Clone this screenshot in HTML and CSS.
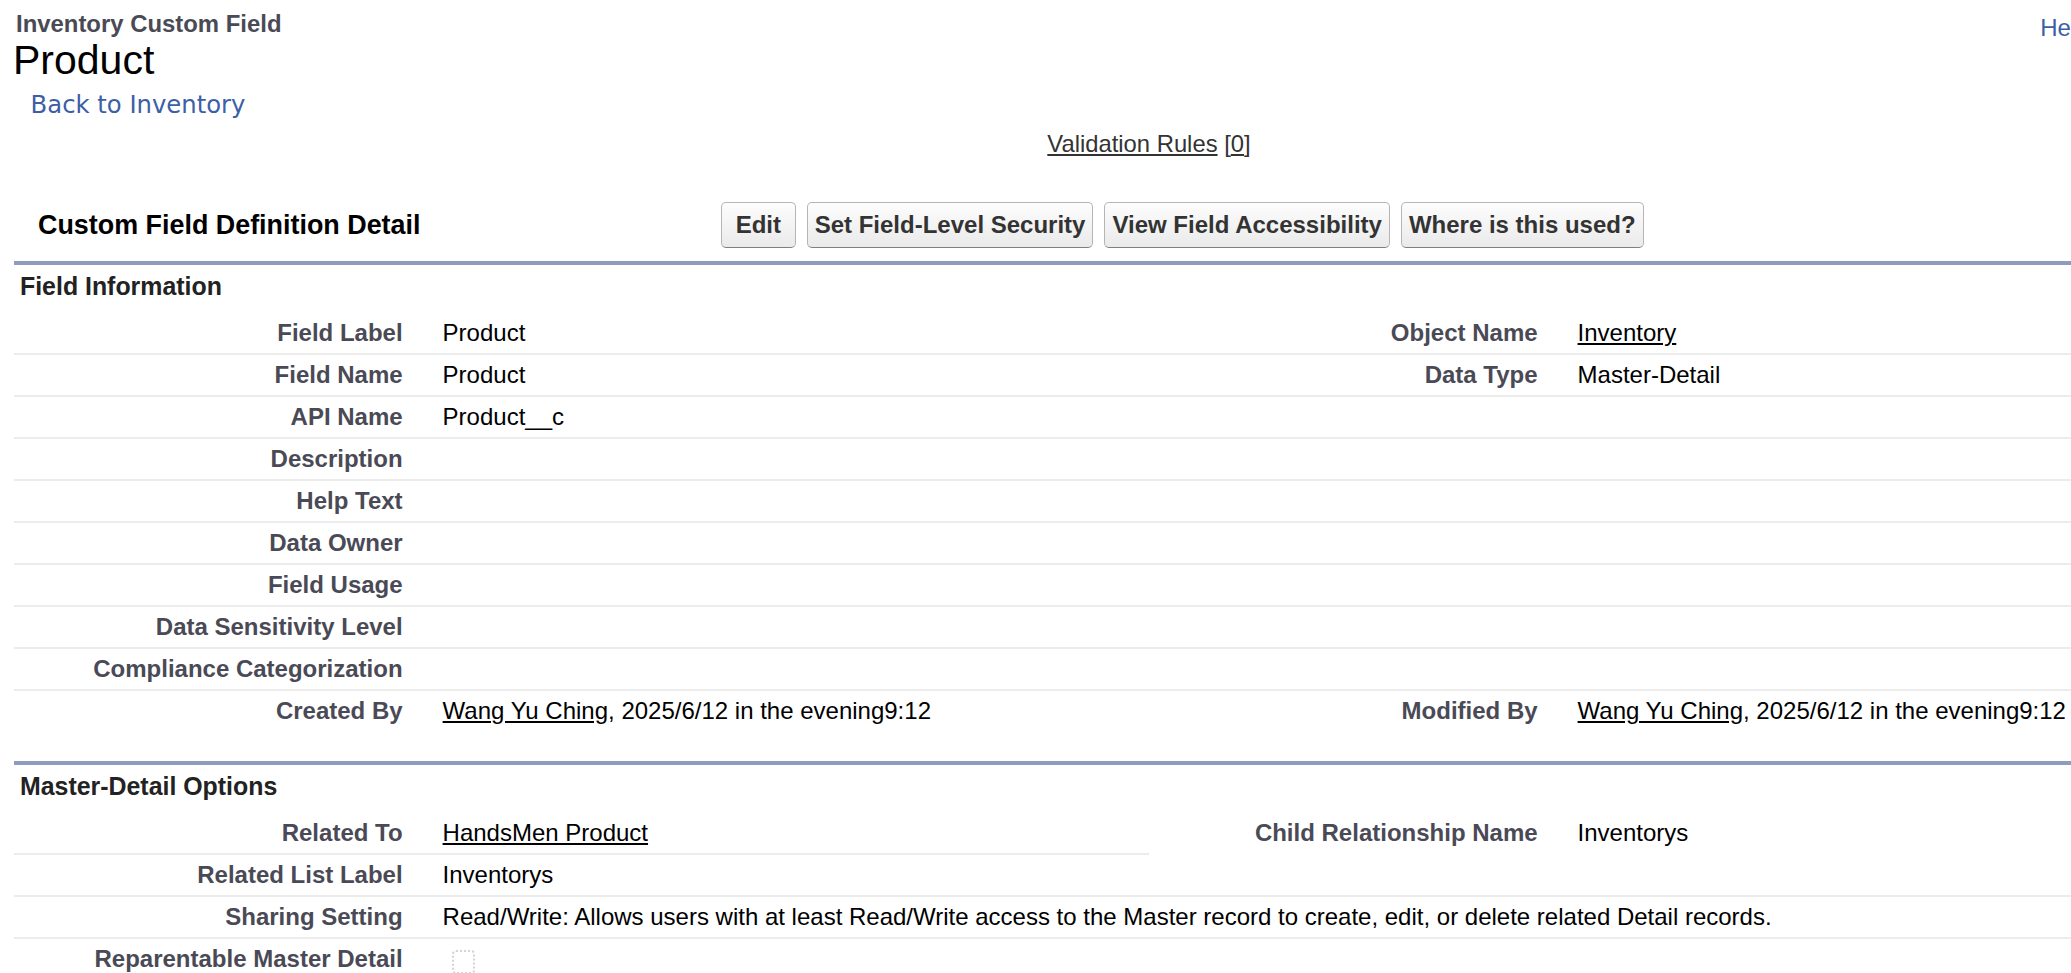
FILE: index.html
```html
<!DOCTYPE html>
<html lang="en">
<head>
<meta charset="utf-8">
<title>Inventory Custom Field: Product</title>
<link rel="stylesheet" href="styles.css">
</head>
<body>
<div class="page">
  <div class="top">
    <div class="titles">
      <div class="page-type">Inventory Custom Field</div>
      <h1 class="page-desc">Product</h1>
    </div>
    <a class="help" href="#">Help for this Page</a>
  </div>
  <div class="breadcrumb"><a href="#">Back to Inventory</a></div>
  <div class="related-links"><a href="#">Validation Rules</a> [<a href="#">0</a>]</div>

  <div class="block">
    <div class="block-header">
      <h2 class="block-title">Custom Field Definition Detail</h2>
      <div class="buttons">
        <button class="btn" type="button">&nbsp;Edit&nbsp;</button>
        <button class="btn" type="button">Set Field-Level Security</button>
        <button class="btn" type="button">View Field Accessibility</button>
        <button class="btn" type="button">Where is this used?</button>
      </div>
    </div>

    <div class="section">
      <h3 class="section-title">Field Information</h3>
      <table class="detail">
        <colgroup><col class="c-label"><col class="c-data"><col class="c-label"><col class="c-data"></colgroup>
        <tbody>
          <tr><th>Field Label</th><td>Product</td><th>Object Name</th><td><a href="#">Inventory</a></td></tr>
          <tr><th>Field Name</th><td>Product</td><th>Data Type</th><td>Master-Detail</td></tr>
          <tr><th>API Name</th><td>Product__c</td><th></th><td></td></tr>
          <tr><th>Description</th><td></td><th></th><td></td></tr>
          <tr><th>Help Text</th><td></td><th></th><td></td></tr>
          <tr><th>Data Owner</th><td></td><th></th><td></td></tr>
          <tr><th>Field Usage</th><td></td><th></th><td></td></tr>
          <tr><th>Data Sensitivity Level</th><td></td><th></th><td></td></tr>
          <tr><th>Compliance Categorization</th><td></td><th></th><td></td></tr>
          <tr class="last"><th>Created By</th><td><a href="#">Wang Yu Ching</a>, 2025/6/12 in the evening9:12</td><th>Modified By</th><td><a href="#">Wang Yu Ching</a>, 2025/6/12 in the evening9:12</td></tr>
        </tbody>
      </table>
    </div>

    <div class="section">
      <h3 class="section-title">Master-Detail Options</h3>
      <table class="detail">
        <colgroup><col class="c-label"><col class="c-data"><col class="c-label"><col class="c-data"></colgroup>
        <tbody>
          <tr><th>Related To</th><td><a href="#">HandsMen Product</a></td><th class="noline">Child Relationship Name</th><td class="noline">Inventorys</td></tr>
          <tr><th>Related List Label</th><td>Inventorys</td><th></th><td></td></tr>
          <tr><th>Sharing Setting</th><td colspan="3">Read/Write: Allows users with at least Read/Write access to the Master record to create, edit, or delete related Detail records.</td></tr>
          <tr class="last"><th>Reparentable Master Detail</th><td><span class="checkbox" role="img" aria-label="Not Checked"></span></td><th></th><td></td></tr>
        </tbody>
      </table>
    </div>
  </div>
</div>
</body>
</html>
```

FILE: styles.css
```css
html {
  overflow: hidden;
}

body {
  margin: 0;
  font-family: "Liberation Sans", Arial, sans-serif;
  color: #000;
  background: #fff;
}

.page {
  width: 2270px;
  padding: 0 14px;
}

.top {
  display: flex;
  justify-content: space-between;
  align-items: flex-start;
}

.page-type {
  padding: 10px 0 0 2px;
  font-size: 23.9px;
  line-height: 27px;
  font-weight: bold;
  color: #4a4a56;
}

.page-desc {
  margin: 0 0 0 -1px;
  font-size: 41px;
  line-height: 46px;
  font-weight: normal;
  color: #000;
}

.help {
  margin: 14px 53px 0 0;
  font-size: 24px;
  line-height: 28px;
  color: #3c5fa5;
  text-decoration: none;
}

.breadcrumb {
  margin-top: 8.4px;
  padding-left: 16.6px;
  font-family: "DejaVu Sans", Verdana, sans-serif;
  font-size: 24.3px;
  line-height: 28px;
}

.breadcrumb a {
  color: #3c5fa5;
  text-decoration: none;
}

.related-links {
  margin-top: 10.8px;
  text-align: center;
  font-size: 23.8px;
  line-height: 27px;
  color: #333;
}

.related-links a {
  color: #333;
  text-decoration: underline;
}

.block-header {
  display: flex;
  align-items: center;
  margin-top: 44.6px;
  height: 46px;
  margin-bottom: 13px;
}

.block-title {
  flex: 0 0 707px;
  box-sizing: border-box;
  margin: 0;
  padding-left: 24px;
  font-size: 26.9px;
  line-height: 30px;
  font-weight: bold;
  color: #000;
}

.buttons {
  display: flex;
  gap: 11px;
}

.btn {
  height: 46px;
  padding: 0 7px;
  font-family: "Liberation Sans", Arial, sans-serif;
  font-size: 24px;
  line-height: 28px;
  font-weight: bold;
  color: #333;
  white-space: pre;
  background: linear-gradient(#fdfdfd, #eaeaea);
  border: 1px solid #b5b5b5;
  border-bottom-color: #7f7f7f;
  border-radius: 5px;
}

.section {
  border-top: 4px solid #8e9dbe;
}

.section + .section {
  margin-top: 28px;
}

.section-title {
  margin: 0;
  padding: 7.4px 0 12.6px 6px;
  font-size: 24.9px;
  line-height: 28px;
  font-weight: bold;
  color: #222;
}

.detail {
  width: 100%;
  table-layout: fixed;
  border-collapse: collapse;
  border-spacing: 0;
}

.c-label {
  width: 18%;
}

.c-data {
  width: 32%;
}

.detail th,
.detail td {
  padding: 7.5px 20px 6.5px;
  font-size: 24px;
  line-height: 26px;
  vertical-align: top;
  border-bottom: 2px solid #ececec;
  white-space: nowrap;
}

.detail th {
  text-align: right;
  font-weight: bold;
  color: #4a4a56;
}

.detail td {
  text-align: left;
  font-weight: normal;
  color: #000;
}

.detail tr.last th,
.detail tr.last td,
.detail .noline {
  border-bottom-color: transparent;
}

.detail a {
  color: #000;
  text-decoration: underline;
}

.checkbox {
  display: inline-block;
  width: 19px;
  height: 20px;
  margin: 4px 0 0 9px;
  border: 2px dotted #d4d4d4;
  border-radius: 4px;
  vertical-align: top;
}
```
